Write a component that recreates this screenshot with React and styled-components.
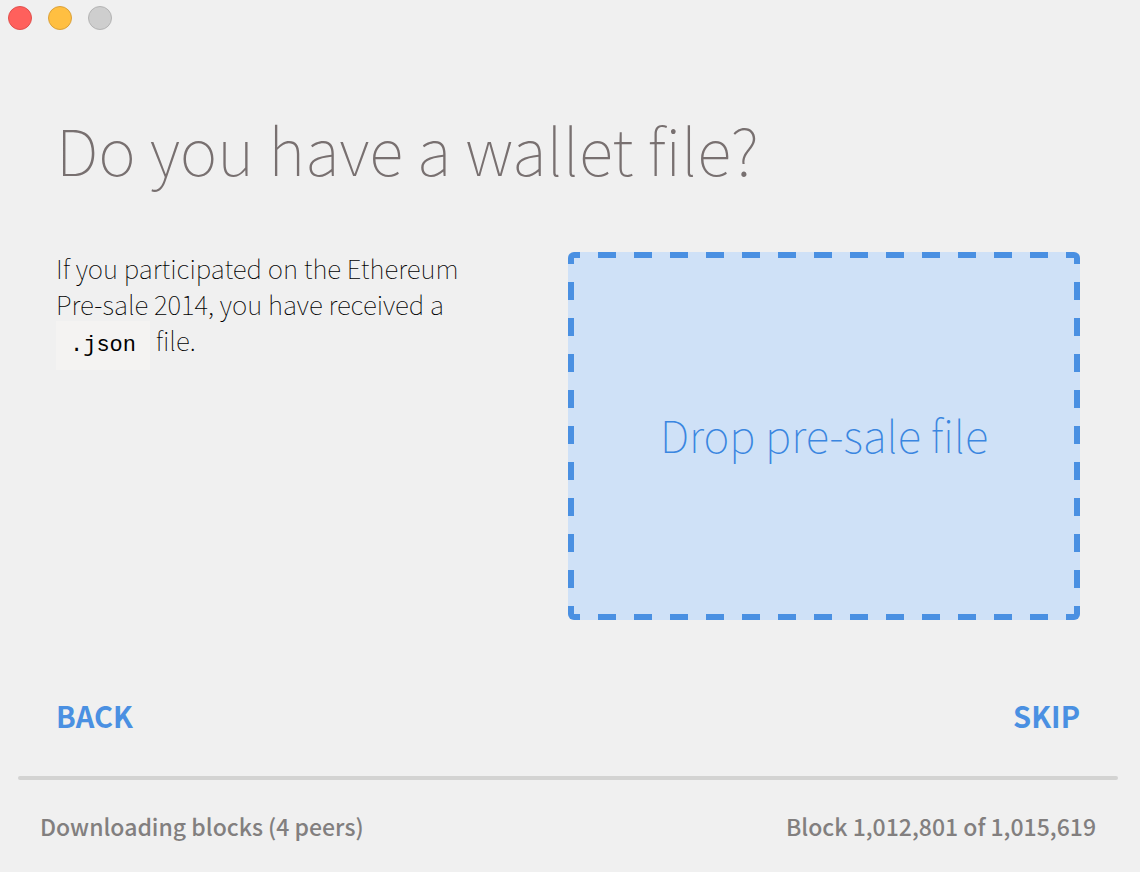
import styled, { createGlobalStyle } from "styled-components";

const GlobalStyle = createGlobalStyle`
    *,
    *::before,
    *::after {
        box-sizing: border-box;
    }

    body {
        margin: 0;
        background-color: #f0f0f0;
        color: #000;
        font-family: "Noto Sans CJK SC", "Noto Sans", sans-serif;
        font-weight: 100;
    }
`;

const Window = styled.div`
    display: flex;
    flex-direction: column;
    min-height: 100vh;
`;

const TitleBar = styled.header`
    display: flex;
    gap: 16px;
    padding: 6px 8px;
`;

const WindowButton = styled.button`
    width: 24px;
    height: 24px;
    padding: 0;
    border: 1px solid ${(props) => props.$border};
    border-radius: 50%;
    background-color: ${(props) => props.$color};
`;

const Content = styled.main`
    flex: 1;
    display: flex;
    flex-direction: column;
    padding: 62px 60px 40px 56px;
`;

const Heading = styled.h1`
    margin: 0 0 52px;
    color: #787070;
    font-size: 64px;
    line-height: 100px;
    font-weight: 100;
`;

const Columns = styled.div`
    display: grid;
    grid-template-columns: 1fr 1fr;
`;

const Description = styled.p`
    margin: 0;
    padding-right: 60px;
    font-size: 26px;
    line-height: 36px;
`;

const FileType = styled.code`
    padding: 12px 14px;
    background-color: #f4f3f2;
    font-family: "Liberation Mono", monospace;
    font-size: 22px;
    font-weight: 400;
`;

const dash = "#4a90e2 0 18px, transparent 18px 36px";

const DropZone = styled.button`
    min-height: 368px;
    margin-top: 2px;
    padding: 0 0 4px;
    border: none;
    border-radius: 6px;
    background-color: #cfe1f7;
    background-image: repeating-linear-gradient(90deg, ${dash}),
        repeating-linear-gradient(90deg, ${dash}),
        repeating-linear-gradient(180deg, ${dash}),
        repeating-linear-gradient(180deg, ${dash});
    background-position: -6px 0, -6px 100%, 0 -6px, 100% -6px;
    background-size: 200% 6px, 200% 6px, 6px 200%, 6px 200%;
    background-repeat: no-repeat;
    color: #3a86e0;
    font-family: inherit;
    font-size: 44px;
    font-weight: 100;
`;

const Navigation = styled.nav`
    display: flex;
    justify-content: space-between;
    margin-top: auto;
`;

const NavButton = styled.button`
    padding: 0;
    border: none;
    background: none;
    color: #4a90e2;
    font-family: inherit;
    font-size: 29px;
    line-height: 42px;
    font-weight: 700;
    text-transform: uppercase;
`;

const Divider = styled.hr`
    height: 4px;
    width: calc(100% - 40px);
    margin: 0 22px 0 18px;
    border: none;
    border-radius: 2px;
    background-color: #d3d3d2;
`;

const StatusBar = styled.footer`
    display: flex;
    justify-content: space-between;
    padding: 28px 44px 28px 40px;
    color: #827f7f;
    font-size: 23px;
    line-height: 36px;
    font-weight: 500;
`;

function App() {
    return (
        <Window>
            <GlobalStyle />
            <TitleBar>
                <WindowButton aria-label="Close" $color="#ff605c" $border="#e1504d" />
                <WindowButton aria-label="Minimize" $color="#ffbf41" $border="#dba13a" />
                <WindowButton aria-label="Zoom" $color="#cecece" $border="#b4b4b4" disabled />
            </TitleBar>
            <Content>
                <Heading>Do you have a wallet file?</Heading>
                <Columns>
                    <Description>
                        If you participated on the Ethereum Pre-sale 2014, you have received a{" "}
                        <FileType>.json</FileType> file.
                    </Description>
                    <DropZone type="button">Drop pre-sale file</DropZone>
                </Columns>
                <Navigation>
                    <NavButton type="button">Back</NavButton>
                    <NavButton type="button">Skip</NavButton>
                </Navigation>
            </Content>
            <Divider />
            <StatusBar>
                <span>Downloading blocks (4 peers)</span>
                <span>Block 1,012,801 of 1,015,619</span>
            </StatusBar>
        </Window>
    );
}

export default App;
